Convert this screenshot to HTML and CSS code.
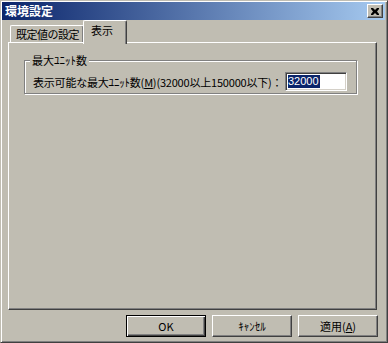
FILE: index.html
```html
<!DOCTYPE html>
<html lang="ja">
<head>
<meta charset="utf-8">
<link rel="stylesheet" href="styles.css">
</head>
<body>
<div class="window">
  <div class="titlebar">
    <span class="title">環境設定</span>
    <span class="close-btn"><svg width="8" height="7" viewBox="0 0 8 7"><path d="M0 0h2l2 2 2-2h2v1L6 3.5 8 6v1H6L4 5 2 7H0V6l2-2.5L0 1z" fill="#000"/></svg></span>
  </div>
  <div class="tabs">
    <div class="tab">既定値の設定</div>
    <div class="tab active">表示</div>
  </div>
  <div class="panel">
    <fieldset class="group">
      <legend>最大ﾕﾆｯﾄ数</legend>
      <div class="row">
        <span class="label">表示可能な最大ﾕﾆｯﾄ数(<u>M</u>)(32000以上150000以下)：</span>
        <span class="edit"><span class="sel">32000</span></span>
      </div>
    </fieldset>
  </div>
  <div class="buttons">
    <div class="btn default"><span>OK</span></div>
    <div class="btn"><span>ｷｬﾝｾﾙ</span></div>
    <div class="btn"><span>適用(<u>A</u>)</span></div>
  </div>
</div>
</body>
</html>
```
FILE: styles.css
```css
* { box-sizing: border-box; }
html, body { margin: 0; padding: 0; }
body {
  width: 388px;
  height: 343px;
  background: #c0bdb2;
  font-family: "Noto Sans CJK JP", "Noto Sans", sans-serif;
  font-size: 11px;
  color: #000;
  overflow: hidden;
}
.window {
  width: 388px;
  height: 343px;
  background: #c0bdb2;
  border-top: 1px solid #c0bdb2;
  border-left: 1px solid #c0bdb2;
  border-right: 1px solid #404040;
  border-bottom: 1px solid #404040;
  box-shadow: inset 1px 1px 0 #fff, inset -1px -1px 0 #808080;
  padding: 1px 2px 2px 1px;
  display: flex;
  flex-direction: column;
}
.titlebar {
  height: 18px;
  background: linear-gradient(to right, #0a246a, #a6caf0);
  display: flex;
  align-items: center;
  justify-content: space-between;
  padding: 0 2px 0 3px;
}
.title {
  color: #fff;
  font-weight: bold;
  font-size: 12px;
  line-height: 18px;
}
.close-btn {
  width: 16px;
  height: 14px;
  background: #c0bdb2;
  border-top: 1px solid #fff;
  border-left: 1px solid #fff;
  border-right: 1px solid #404040;
  border-bottom: 1px solid #404040;
  box-shadow: inset -1px -1px 0 #808080;
  display: flex;
  align-items: center;
  justify-content: center;
}
.tabs {
  display: flex;
  align-items: flex-end;
  height: 22px;
  margin-left: 8px;
  position: relative;
  z-index: 1;
}
.tab {
  height: 17px;
  padding: 0 0 0 5px;
  line-height: 16px;
  white-space: nowrap;
  letter-spacing: -0.5px;
  border-top: 1px solid #fff;
  border-left: 1px solid #fff;
  border-right: 1px solid #404040;
  box-shadow: inset -1px 0 0 #808080;
  border-radius: 2px 2px 0 0;
  width: 74px;
}
.tab.active {
  width: 44px;
  margin-left: -1px;
  padding: 0 0 0 7px;
  line-height: 18px;
  letter-spacing: 0;
  background: #c0bdb2;
  margin-bottom: -2px;
  height: 24px;
}
.panel {
  margin-left: 6px;
  width: 369px;
  height: 268px;
  border-top: 1px solid #fff;
  border-left: 1px solid #fff;
  border-right: 1px solid #404040;
  border-bottom: 1px solid #404040;
  box-shadow: inset -1px -1px 0 #808080;
  padding: 11px 19px 0 15px;
}
.group {
  margin: 0;
  padding: 4px 9px 0 8px;
  height: 40px;
  border: 1px solid #808080;
  box-shadow: 1px 1px 0 #fff, inset 1px 1px 0 #fff;
}
.group legend {
  padding: 0 2px 0 2px;
  margin-left: -3px;
  line-height: 12px;
  background: #c0bdb2;
}
.row {
  display: flex;
  align-items: center;
  height: 19px;
  margin-top: 2px;
}
.label { white-space: nowrap; letter-spacing: -0.2px; }
.edit {
  margin-left: auto;
  width: 62px;
  height: 19px;
  background: #fff;
  border-top: 1px solid #808080;
  border-left: 1px solid #808080;
  border-right: 1px solid #fff;
  border-bottom: 1px solid #fff;
  box-shadow: inset 1px 1px 0 #404040, inset -1px -1px 0 #d4d0c8;
  padding: 2px 0 0 2px;
  display: flex;
}
.sel {
  background: #0a246a;
  color: #fff;
  line-height: 13px;
  height: 13px;
  padding: 0 1px 0 0;
  font-family: "Liberation Sans", sans-serif;
  font-size: 11px;
}
.buttons {
  display: flex;
  justify-content: flex-end;
  gap: 6px;
  margin-top: 5px;
  padding-right: 7px;
}
.btn {
  width: 80px;
  height: 22px;
  border-top: 1px solid #fff;
  border-left: 1px solid #fff;
  border-right: 1px solid #404040;
  border-bottom: 1px solid #404040;
  box-shadow: inset -1px -1px 0 #808080;
  display: flex;
  align-items: center;
  justify-content: center;
  line-height: 14px;
}
.btn.default {
  border: 1px solid #000;
  box-shadow: inset 1px 1px 0 #fff, inset -1px -1px 0 #404040, inset -2px -2px 0 #808080;
}
```
